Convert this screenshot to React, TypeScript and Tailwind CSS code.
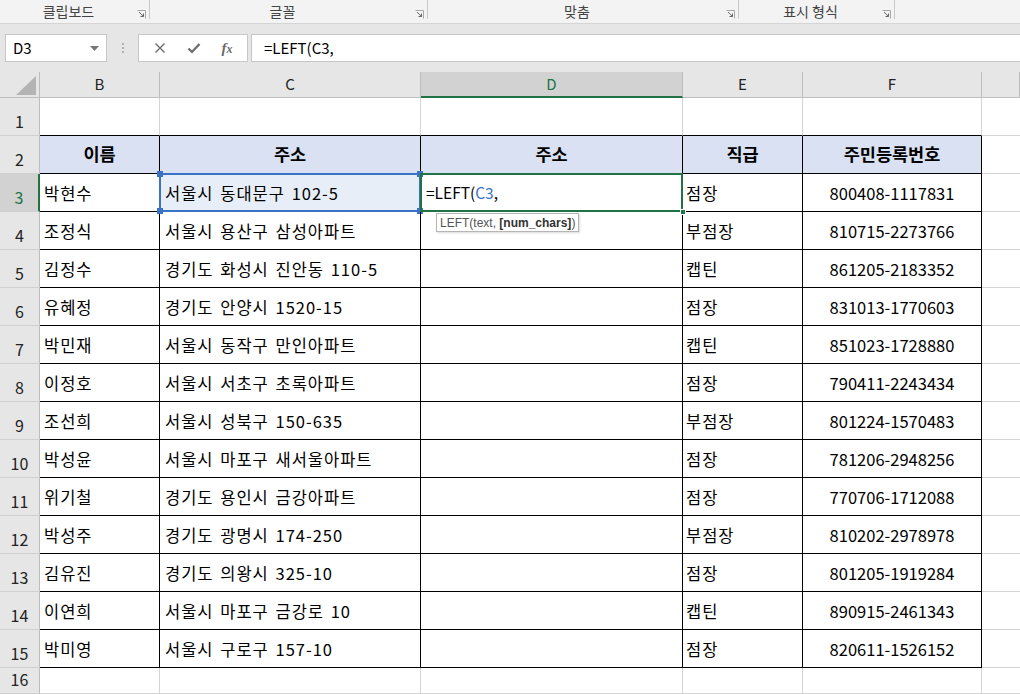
import React from "react";

const FONT = { fontFamily: '"Noto Sans CJK KR", "Noto Sans", "Liberation Sans", sans-serif' };

type Row = { b: string; c: string; e: string; f: string };
const rows: Row[] = [
  { b: "박현수", c: "서울시 동대문구 102-5", e: "점장", f: "800408-1117831" },
  { b: "조정식", c: "서울시 용산구 삼성아파트", e: "부점장", f: "810715-2273766" },
  { b: "김정수", c: "경기도 화성시 진안동 110-5", e: "캡틴", f: "861205-2183352" },
  { b: "유혜정", c: "경기도 안양시 1520-15", e: "점장", f: "831013-1770603" },
  { b: "박민재", c: "서울시 동작구 만인아파트", e: "캡틴", f: "851023-1728880" },
  { b: "이정호", c: "서울시 서초구 초록아파트", e: "점장", f: "790411-2243434" },
  { b: "조선희", c: "서울시 성북구 150-635", e: "부점장", f: "801224-1570483" },
  { b: "박성윤", c: "서울시 마포구 새서울아파트", e: "점장", f: "781206-2948256" },
  { b: "위기철", c: "경기도 용인시 금강아파트", e: "점장", f: "770706-1712088" },
  { b: "박성주", c: "경기도 광명시 174-250", e: "부점장", f: "810202-2978978" },
  { b: "김유진", c: "경기도 의왕시 325-10", e: "점장", f: "801205-1919284" },
  { b: "이연희", c: "서울시 마포구 금강로 10", e: "캡틴", f: "890915-2461343" },
  { b: "박미영", c: "서울시 구로구 157-10", e: "점장", f: "820611-1526152" },
];

const COLS = "grid-cols-[40px_120px_261px_262px_120px_179px_1fr]";

function Launcher() {
  return (
    <svg width="9" height="9" viewBox="0 0 9 9" className="shrink-0">
      <path d="M0.5 0.5H8.5V8.5" fill="none" stroke="#a6a6a6" />
      <path d="M2 2L6.5 6.5M6.5 3.5V6.5H3.5" fill="none" stroke="#666" />
    </svg>
  );
}

function RibbonGroup({ label, width, last }: { label: string; width: string; last?: boolean }) {
  return (
    <div className={`${width} h-full flex items-end relative`}>
      <div className="flex-1 flex justify-center pb-[1px] text-[14px] text-[#444]">{label}</div>
      {!last && (
        <div className="flex items-end h-full">
          <div className="pb-[4px] pr-[3px]"><Launcher /></div>
          <div className="w-px h-[19px] self-start bg-[#c8c8c8]" />
        </div>
      )}
    </div>
  );
}

function RowHeader({ n, active, h = "h-[38px]" }: { n: number; active?: boolean; h?: string }) {
  return (
    <div
      className={`${h} flex items-end justify-center pb-[2px] text-[16px] border-b border-[#d0d0d0] ${
        active
          ? "bg-[#d2d2d2] text-[#217346] border-r-2 border-r-[#217346]"
          : "bg-[#e6e6e6] text-[#222] border-r border-r-[#bdbdbd]"
      }`}
    >
      {n}
    </div>
  );
}

export default function App() {
  const gray = "border-[#d4d4d4]";
  const ko = "tracking-[1px] [word-spacing:2px]";
  return (
    <div className="w-[1020px] h-[694px] overflow-hidden bg-white text-[16.5px] text-black" style={FONT}>
      {/* Ribbon labels */}
      <div className="h-[24px] bg-[#f3f3f3] border-b border-[#d5d5d5] flex">
        <RibbonGroup label="클립보드" width="w-[150px]" />
        <RibbonGroup label="글꼴" width="w-[278px]" />
        <RibbonGroup label="맞춤" width="w-[311px]" />
        <RibbonGroup label="표시 형식" width="w-[156px]" />
      </div>

      {/* Formula bar */}
      <div className="h-[48px] bg-[#e6e6e6] flex items-start pt-[10px] pl-[5px]">
        <div className="w-[102px] h-[28px] bg-white border border-[#c6c6c6] flex items-center justify-between pl-[7px] pr-[7px] text-[15px]">
          <span>D3</span>
          <svg width="9" height="5" viewBox="0 0 9 5"><path d="M0 0H9L4.5 5Z" fill="#777" /></svg>
        </div>
        <div className="w-[31px] h-[28px] flex flex-col items-center justify-center gap-[2px]">
          <div className="w-[2px] h-[2px] bg-[#b0b0b0]" />
          <div className="w-[2px] h-[2px] bg-[#b0b0b0]" />
          <div className="w-[2px] h-[2px] bg-[#b0b0b0]" />
        </div>
        <div className="w-[110px] h-[28px] bg-white border border-[#c6c6c6] flex items-center justify-around px-[4px]">
          <svg width="12" height="12" viewBox="0 0 12 12"><path d="M1.5 1.5L10.5 10.5M10.5 1.5L1.5 10.5" stroke="#6b6b6b" strokeWidth="1.4" /></svg>
          <svg width="14" height="12" viewBox="0 0 14 12"><path d="M1.5 6.5L5 10L12.5 2" fill="none" stroke="#6b6b6b" strokeWidth="2.2" /></svg>
          <span className="text-[15px] italic text-[#6b6b6b] font-semibold leading-none" style={{ fontFamily: '"Liberation Serif", serif' }}>
            f<span className="text-[12px]">x</span>
          </span>
        </div>
        <div className="ml-[3px] flex-1 h-[28px] bg-white border border-[#c6c6c6] border-r-0 flex items-center pl-[12px] text-[15px]">
          =LEFT(C3,
        </div>
      </div>

      {/* Sheet */}
      <div className={`grid ${COLS}`}>
        {/* Column headers */}
        <div className="h-[26px] bg-[#e6e6e6] border-r border-b border-[#bdbdbd] flex items-end justify-end pr-[3px] pb-[2px]">
          <svg width="20" height="19" viewBox="0 0 20 19"><path d="M20 0V19H0Z" fill="#b4b4b4" /></svg>
        </div>
        {["B", "C", "D", "E", "F", ""].map((l) => (
          <div
            key={l || "G"}
            className={`h-[26px] flex items-center justify-center text-[15px] ${
              l === "D"
                ? "bg-[#d2d2d2] text-[#217346] border-b-2 border-b-[#217346] border-r border-r-[#bdbdbd]"
                : "bg-[#e6e6e6] text-[#222] border-b border-b-[#bdbdbd] border-r border-r-[#bdbdbd]"
            }`}
          >
            {l}
          </div>
        ))}

        {/* Row 1 */}
        <RowHeader n={1} />
        {[0, 1, 2, 3, 4].map((i) => (
          <div key={i} className="h-[38px] border-r border-r-[#d4d4d4] border-b border-b-black" />
        ))}
        <div className={`h-[38px] border-b ${gray}`} />

        {/* Row 2 header */}
        <RowHeader n={2} />
        {["이름", "주소", "주소", "직급", "주민등록번호"].map((h, i) => (
          <div key={i} className="h-[38px] bg-[#d9e1f2] border-r border-b border-black flex items-center justify-center font-bold text-[17.5px]">
            {h}
          </div>
        ))}
        <div className={`h-[38px] border-b ${gray}`} />

        {rows.map((r, idx) => {
          const n = idx + 3;
          const active = n === 3;
          return (
            <React.Fragment key={n}>
              <RowHeader n={n} active={active} />
              <div className={`h-[38px] border-r border-b border-black flex items-center pl-[4px] pt-[1px] ${ko}`}>{r.b}</div>
              <div className={`h-[38px] border-r border-b border-black flex items-center pl-[5px] pt-[1px] relative whitespace-nowrap ${active ? "bg-[#e8eef8]" : ""}`}>
                <span className={ko}>{r.c}</span>
                {active && (
                  <>
                    <div className="absolute left-[-1px] top-[-1px] right-[-1px] bottom-[-1px] border-2 border-[#3a72c8] pointer-events-none" />
                    <div className="absolute left-[-3px] top-[-3px] w-[6px] h-[6px] bg-[#3a72c8]" />
                    <div className="absolute right-[-3px] top-[-3px] w-[6px] h-[6px] bg-[#3a72c8]" />
                    <div className="absolute left-[-3px] bottom-[-3px] w-[6px] h-[6px] bg-[#3a72c8]" />
                    <div className="absolute right-[-3px] bottom-[-3px] w-[6px] h-[6px] bg-[#3a72c8]" />
                  </>
                )}
              </div>
              <div className="h-[38px] border-r border-b border-black flex items-center pl-[5px] pt-[1px] relative">
                {active && (
                  <>
                    <span className="text-[15.5px]">=LEFT(<span className="text-[#3a72c8]">C3</span>,</span>
                    <div className="absolute left-[-1px] top-[-1px] right-[-1px] bottom-[-1px] border-2 border-[#217346] z-10" />
                    <div className="absolute right-[-4px] bottom-[-4px] w-[6px] h-[6px] bg-[#217346] border border-white z-20" />
                    <div
                      className="absolute left-[15px] top-[39px] h-[19px] px-[3px] bg-white border border-[#b5b5b5] shadow-[1px_1px_2px_rgba(0,0,0,0.15)] flex items-center text-[12px] text-[#555] whitespace-nowrap z-20"
                      style={{ fontFamily: '"Liberation Sans", "Noto Sans", sans-serif' }}
                    >
                      LEFT(text,&nbsp;<span className="font-bold text-[#333]">[num_chars]</span>)
                    </div>
                  </>
                )}
              </div>
              <div className={`h-[38px] border-r border-b border-black flex items-center pl-[3px] pt-[1px] ${ko}`}>{r.e}</div>
              <div className="h-[38px] border-r border-b border-black flex items-center justify-center pt-[1px]">{r.f}</div>
              <div className={`h-[38px] border-b ${gray}`} />
            </React.Fragment>
          );
        })}

        {/* Row 16 */}
        <RowHeader n={16} h="h-[26px]" />
        {[0, 1, 2, 3, 4].map((i) => (
          <div key={i} className={`h-[26px] border-r border-b ${gray}`} />
        ))}
        <div className={`h-[26px] border-b ${gray}`} />
      </div>
    </div>
  );
}
